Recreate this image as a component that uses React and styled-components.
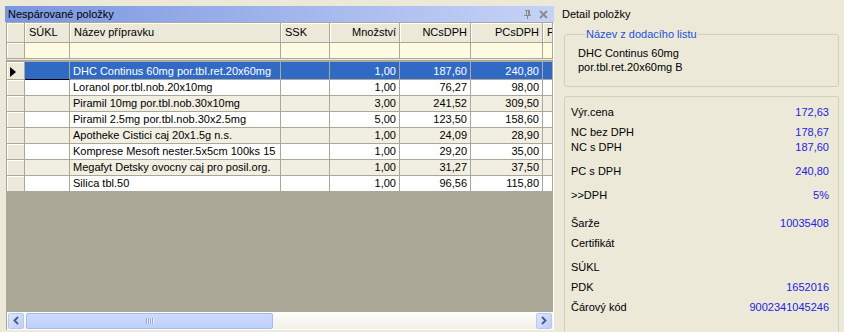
import React from 'react';
import styled, { createGlobalStyle } from 'styled-components';

const GlobalStyle = createGlobalStyle`
  html, body { margin: 0; padding: 0; background: #ECE9D8; }
  body { font-family: "Liberation Sans", Arial, sans-serif; font-size: 11px; color: #000; }
  * { box-sizing: border-box; }
`;

const COLS = '18px 45px 211px 49px 70px 71px 72px 1fr';

const Root = styled.div`
  display: flex;
  width: 844px;
  height: 332px;
  overflow: hidden;
  background: #ECE9D8;
`;

const LeftPanel = styled.div`
  width: 556px;
  flex: none;
  display: flex;
  flex-direction: column;
  padding: 6px 0 2px 5px;
`;

const TitleBar = styled.div`
  height: 16px;
  width: 549px;
  display: flex;
  align-items: center;
  padding: 0 6px 0 3px;
  background: linear-gradient(to right, #7A96DF, #C6D3F7);
`;

const TitleText = styled.span`
  flex: 1;
  font-size: 11px;
  color: #000;
  white-space: nowrap;
`;

const TitleIcons = styled.div`
  display: flex;
  align-items: center;
  gap: 7px;
  color: #8C8C8C;
`;

const GridFrame = styled.div`
  flex: 1;
  display: flex;
  flex-direction: column;
  width: 548px;
  margin-left: 1px;
  border-left: 1px solid #ACA899;
  border-right: 1px solid #FFFFFF;
  border-top: 1px solid #ACA899;
  overflow: hidden;
`;

const Row = styled.div`
  display: grid;
  grid-template-columns: ${COLS};
  height: ${p => p.$h}px;
  flex: none;
`;

const Cell = styled.div`
  background: ${p => p.$bg};
  color: ${p => p.$fg || '#000'};
  border-right: 1px solid #ACA899;
  border-bottom: 1px solid ${p => p.$bb || '#ACA899'};
  padding: ${p => (p.$right ? '0 3px 0 2px' : '0 2px 0 3px')};
  text-align: ${p => (p.$right ? 'right' : 'left')};
  white-space: nowrap;
  overflow: hidden;
  display: flex;
  align-items: center;
  justify-content: ${p => (p.$right ? 'flex-end' : 'flex-start')};
  padding-top: ${p => p.$pt || 0}px;
  line-height: 13px;
`;

const HeaderCell = styled(Cell)`
  background: #ECE9D8;
  box-shadow: inset 1px 1px 0 #FFFFFF;
  padding-left: ${p => (p.$right ? '2px' : '4px')};
`;

const Indicator = styled.div`
  background: #ECE9D8;
  border-right: 1px solid #ACA899;
  border-bottom: 1px solid #ACA899;
  box-shadow: inset 1px 1px 0 #FFFFFF;
  display: flex;
  align-items: center;
  padding-left: 3px;
  padding-top: ${p => p.$pt || 0}px;
`;

const Arrow = styled.span`
  width: 0;
  height: 0;
  border-left: 6px solid #000;
  border-top: 5px solid transparent;
  border-bottom: 5px solid transparent;
`;

const Separator = styled.div`
  height: 3px;
  flex: none;
  background: #ECE9D8;
  border-bottom: 2px solid #ACA899;
`;

const EmptyArea = styled.div`
  flex: 1;
  background: #ABA897;
`;

const HScroll = styled.div`
  height: 18px;
  flex: none;
  display: flex;
  align-items: center;
  padding: 0 1px;
  background: linear-gradient(to bottom, #FEFEFB, #F2F0E8);
  border-bottom: 1px solid #FFFFFF;
`;

const ScrollButton = styled.div`
  width: 16px;
  height: 16px;
  flex: none;
  border: 1px solid #B6C9F5;
  border-radius: 2px;
  background: linear-gradient(135deg, #DCE6FD, #BCCEFA);
  display: flex;
  align-items: center;
  justify-content: center;
`;

const Thumb = styled.div`
  width: 247px;
  height: 16px;
  margin-left: 2px;
  border: 1px solid #A4BBF0;
  border-radius: 2px;
  background: linear-gradient(to bottom, #CCDAFC, #BED0FA);
  display: flex;
  align-items: center;
  justify-content: center;
`;

const Grip = styled.div`
  width: 8px;
  height: 6px;
  background: repeating-linear-gradient(to right, #8FA8E6 0 1px, #E6EEFF 1px 2px);
`;

const TrackFill = styled.div`
  flex: 1;
`;

const RightPanel = styled.div`
  flex: 1;
  display: flex;
  flex-direction: column;
  padding: 0 5px 0 8px;
`;

const PanelTitle = styled.div`
  margin: 7px 0 0 -2px;
  line-height: 14px;
  height: 14px;
  font-size: 11px;
`;

const NameBox = styled.fieldset`
  margin: 6px 0 0 0;
  padding: 5px 8px 12px 13px;
  border: 1px solid #D0D0BF;
  border-radius: 3px;
  min-width: 0;
`;

const Legend = styled.legend`
  padding: 0 1px;
  margin-left: 7px;
  color: #2152D8;
  line-height: 14px;
  font-size: 11px;
`;

const NameText = styled.div`
  line-height: 14px;
  color: #000;
`;

const InfoBox = styled.div`
  margin-top: 9px;
  flex: 1;
  border: 1px solid #D0D0BF;
  border-bottom: none;
  border-radius: 3px 3px 0 0;
  padding: 8px 9px 0 6px;
  display: flex;
  flex-direction: column;
`;

const InfoRow = styled.div`
  display: flex;
  justify-content: space-between;
  line-height: 14px;
  height: 14px;
  margin-top: ${p => p.$mt}px;
`;

const InfoValue = styled.span`
  color: #2222E2;
`;

const rows = [
  ['DHC Continus 60mg por.tbl.ret.20x60mg', '1,00', '187,60', '240,80'],
  ['Loranol por.tbl.nob.20x10mg', '1,00', '76,27', '98,00'],
  ['Piramil 10mg por.tbl.nob.30x10mg', '3,00', '241,52', '309,50'],
  ['Piramil 2.5mg por.tbl.nob.30x2.5mg', '5,00', '123,50', '158,60'],
  ['Apotheke Cistici caj 20x1.5g n.s.', '1,00', '24,09', '28,90'],
  ['Komprese Mesoft nester.5x5cm 100ks 15', '1,00', '29,20', '35,00'],
  ['Megafyt Detsky ovocny caj pro posil.org.', '1,00', '31,27', '37,50'],
  ['Silica tbl.50', '1,00', '96,56', '115,80'],
];

const info = [
  ['Výr.cena', '172,63', 0],
  ['NC bez DPH', '178,67', 6],
  ['NC s DPH', '187,60', 1],
  ['PC s DPH', '240,80', 10],
  ['>>DPH', '5%', 10],
  ['Šarže', '10035408', 14],
  ['Certifikát', '', 6],
  ['SÚKL', '', 10],
  ['PDK', '1652016', 6],
  ['Čárový kód', '9002341045246', 6],
];

const PinIcon = () => (
  <svg width="9" height="10" viewBox="0 0 9 10">
    <path d="M2 1h5M3 1v5M6 1v5M5 1v5M1 6h7M4.5 6v4" stroke="#8C8C8C" strokeWidth="1" fill="none" shapeRendering="crispEdges" />
  </svg>
);

const CloseIcon = () => (
  <svg width="9" height="9" viewBox="0 0 9 9">
    <path d="M1 1L8 8M8 1L1 8" stroke="#8C8C8C" strokeWidth="2" fill="none" />
  </svg>
);

const LeftArrow = () => (
  <svg width="6" height="9" viewBox="0 0 6 9">
    <path d="M5 1L1.5 4.5L5 8" stroke="#4D6185" strokeWidth="2" fill="none" />
  </svg>
);

const RightArrow = () => (
  <svg width="6" height="9" viewBox="0 0 6 9">
    <path d="M1 1L4.5 4.5L1 8" stroke="#4D6185" strokeWidth="2" fill="none" />
  </svg>
);

export default function App() {
  return (
    <>
      <GlobalStyle />
      <Root>
        <LeftPanel>
          <TitleBar>
            <TitleText>Nespárované položky</TitleText>
            <TitleIcons>
              <PinIcon />
              <CloseIcon />
            </TitleIcons>
          </TitleBar>
          <GridFrame>
            <Row $h={20}>
              <Indicator />
              <HeaderCell>SÚKL</HeaderCell>
              <HeaderCell>Název přípravku</HeaderCell>
              <HeaderCell>SSK</HeaderCell>
              <HeaderCell $right>Množství</HeaderCell>
              <HeaderCell $right>NCsDPH</HeaderCell>
              <HeaderCell $right>PCsDPH</HeaderCell>
              <HeaderCell>Pc</HeaderCell>
            </Row>
            <Row $h={16}>
              <Indicator />
              {Array.from({ length: 7 }).map((_, i) => (
                <Cell key={i} $bg="#FFFBE3" />
              ))}
            </Row>
            <Separator />
            {rows.map((r, i) => {
              const sel = i === 0;
              const bg = sel ? '#316AC5' : i % 2 === 1 ? '#FFFFFF' : '#F1EFE2';
              const fg = sel ? '#FFFFFF' : '#000';
              const pt = sel ? 2 : 0;
              return (
                <Row key={i} $h={sel ? 18 : 16}>
                  <Indicator $pt={pt}>{sel && <Arrow />}</Indicator>
                  <Cell $bg={bg} $fg={fg} $pt={pt} $bb={sel ? '#000' : undefined} />
                  <Cell $bg={bg} $fg={fg} $pt={pt}>{r[0]}</Cell>
                  <Cell $bg={bg} $fg={fg} $pt={pt} />
                  <Cell $bg={bg} $fg={fg} $pt={pt} $right>{r[1]}</Cell>
                  <Cell $bg={bg} $fg={fg} $pt={pt} $right>{r[2]}</Cell>
                  <Cell $bg={bg} $fg={fg} $pt={pt} $right>{r[3]}</Cell>
                  <Cell $bg={bg} $fg={fg} $pt={pt} />
                </Row>
              );
            })}
            <EmptyArea />
            <HScroll>
              <ScrollButton><LeftArrow /></ScrollButton>
              <Thumb><Grip /></Thumb>
              <TrackFill />
              <ScrollButton><RightArrow /></ScrollButton>
            </HScroll>
          </GridFrame>
        </LeftPanel>
        <RightPanel>
          <PanelTitle>Detail položky</PanelTitle>
          <NameBox>
            <Legend>Název z dodacího listu</Legend>
            <NameText>DHC Continus 60mg</NameText>
            <NameText>por.tbl.ret.20x60mg B</NameText>
          </NameBox>
          <InfoBox>
            {info.map(([label, value, mt]) => (
              <InfoRow key={label} $mt={mt}>
                <span>{label}</span>
                <InfoValue>{value}</InfoValue>
              </InfoRow>
            ))}
          </InfoBox>
        </RightPanel>
      </Root>
    </>
  );
}
